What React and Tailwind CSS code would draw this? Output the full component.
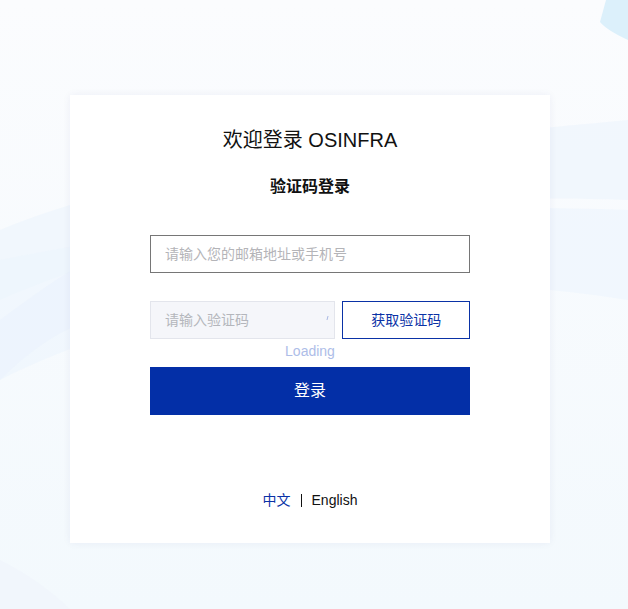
import React, { useState } from 'react';

const Background = () => (
    <svg className="absolute inset-0 w-full h-full" viewBox="0 0 628 609" preserveAspectRatio="none">
        <defs>
            <linearGradient id="bg" x1="0" y1="0" x2="0" y2="1">
                <stop offset="0" stopColor="#fbfcfe" />
                <stop offset="1" stopColor="#f3f9fd" />
            </linearGradient>
        </defs>
        <rect width="628" height="609" fill="url(#bg)" />
        {/* soft waves */}
        <path d="M0 230 C 120 180, 300 150, 628 120 L628 200 C 380 190, 160 230, 0 300 Z" fill="#eef5fc" opacity="0.7" />
        <path d="M0 260 C 150 230, 350 200, 628 210 L628 300 C 380 260, 160 300, 0 380 Z" fill="#edf5fd" opacity="0.6" />
        <path d="M0 320 C 40 290, 70 270, 90 260 L90 320 C 60 330, 30 350, 0 380 Z" fill="#e9f2fd" opacity="0.5" />
        <path d="M0 560 C 40 580, 60 600, 70 609 L0 609 Z" fill="#f1f6fc" />
        {/* top right shape */}
        <path d="M606 0 L628 0 L628 40 C 615 34, 605 28, 600 22 Z" fill="#dcf0fb" />
    </svg>
);

export default function App() {
    const [lang, setLang] = useState('zh');

    return (
        <div className="relative min-h-[609px] w-full overflow-hidden" style={{ fontFamily: '"Liberation Sans", "Noto Sans CJK SC", sans-serif' }}>
            <Background />
            <div className="relative flex justify-center pt-[95px] pr-[8px]">
                <div className="w-[480px] h-[448px] bg-white shadow-[0_0_8px_rgba(0,40,120,0.06)] flex flex-col items-center pt-[31px]">
                    <h1 className="text-[20px] leading-[28px] text-[#111]">欢迎登录 OSINFRA</h1>
                    <h2 className="mt-[21px] text-[16px] leading-[24px] font-bold text-[#111]">验证码登录</h2>

                    <div className="w-[320px] mt-[36px]">
                        <input
                            type="text"
                            placeholder="请输入您的邮箱地址或手机号"
                            className="w-full h-[38px] border border-[#767676] px-[14px] text-[14px] outline-none placeholder:text-[#b4b4b8]"
                        />

                        <div className="mt-[28px] flex gap-[7px]">
                            <div className="relative w-[186px]">
                                <input
                                    type="text"
                                    disabled
                                    placeholder="请输入验证码"
                                    className="w-full h-[38px] bg-[#f5f6fa] border border-[#e3e5ec] px-[14px] text-[14px] outline-none placeholder:text-[#b4b6bc]"
                                />
                                <span className="absolute right-[7px] top-[15px] w-[1px] h-[4px] bg-[#a9b8e2] skew-x-[-15deg]" />
                            </div>
                            <button className="w-[128px] h-[38px] border border-[#0a32a6] text-[#0a32a6] text-[14px]">
                                获取验证码
                            </button>
                        </div>

                        <div className="mt-[2px] text-center text-[14px] leading-[20px] text-[#aebde8]">Loading</div>

                        <button className="mt-[6px] w-full h-[48px] bg-[#032fa7] text-white text-[16px]">
                            登录
                        </button>
                    </div>

                    <div className="mt-[75px] flex items-center text-[14px] leading-[20px]">
                        <button onClick={() => setLang('zh')} className={lang === 'zh' ? 'text-[#0a32a6]' : 'text-[#111]'}>中文</button>
                        <span className="mx-[10px] w-px h-[13px] bg-[#111]" />
                        <button onClick={() => setLang('en')} className={lang === 'en' ? 'text-[#0a32a6]' : 'text-[#111]'}>English</button>
                    </div>
                </div>
            </div>
        </div>
    );
}
